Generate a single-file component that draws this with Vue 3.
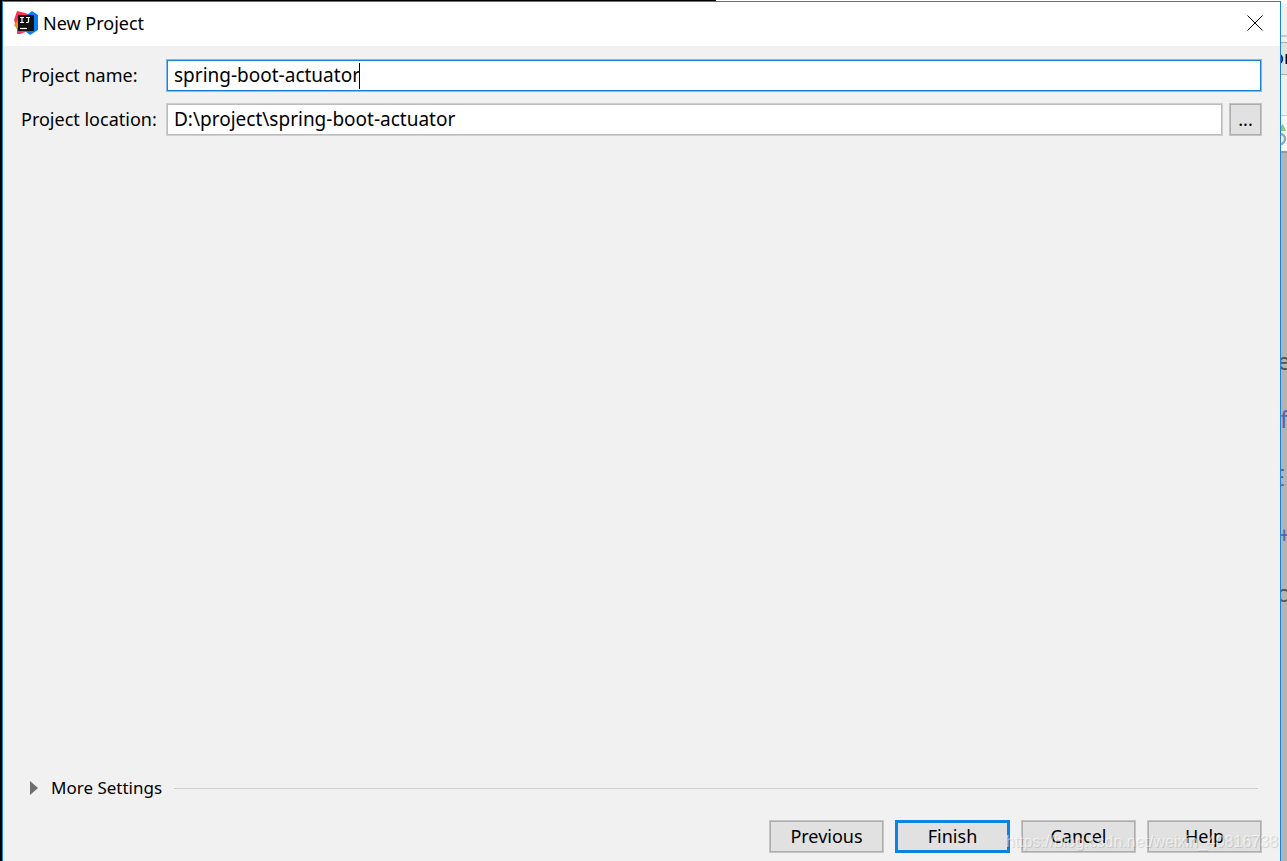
<script setup>
import { ref } from 'vue'

const projectName = ref('spring-boot-actuator')
const projectLocation = ref('D:\\project\\spring-boot-actuator')
const actions = [
  { label: 'Previous' },
  { label: 'Finish', primary: true },
  { label: 'Cancel' },
  { label: 'Help' },
]
</script>

<template>
  <div class="desktop">
    <div class="top-edge"></div>
    <div class="middle">
      <main class="dialog" role="dialog" aria-labelledby="dialog-title">
        <header class="titlebar">
          <svg class="logo" viewBox="0 0 24 24" aria-hidden="true">
            <path d="M3 0 11 2 17 4 8 14 3 17 0 9Z" fill="#fc3158" />
            <path d="M0 14 4 9 8 16 3 18Z" fill="#f68b1f" />
            <path d="M3 17 8 14 14 20 6 23 3 23Z" fill="#fc3168" />
            <path d="M13 4 18 0 24 4V19L16 24 11 20Z" fill="#087cfa" />
            <rect x="4" y="4" width="16" height="16" fill="#111" />
            <path d="M6 6.5h4M8 6.5v5M6 11.5h4M12 6.5h4M14.5 6.5v4q0 1-1 1h-1.500" fill="none" stroke="#fff" stroke-width="1.2" />
            <path d="M6 17.5h7" stroke="#fff" stroke-width="1.2" />
          </svg>
          <h1 id="dialog-title">New Project</h1>
          <button class="close" type="button" aria-label="Close">
            <svg viewBox="0 0 16 16" aria-hidden="true">
              <path d="M.5.5l15 15M15.5.5l-15 15" stroke="#000" stroke-width="1" />
            </svg>
          </button>
        </header>

        <form class="content" @submit.prevent>
          <div class="row">
            <label for="project-name">Project name:</label>
            <div class="field focused">
              <input id="project-name" v-model="projectName" type="text" spellcheck="false" />
              <span class="caret" aria-hidden="true"></span>
            </div>
          </div>
          <div class="row">
            <label for="project-location">Project location:</label>
            <div class="field">
              <input id="project-location" v-model="projectLocation" class="wide" type="text" spellcheck="false" />
            </div>
            <button class="browse" type="button">...</button>
          </div>

          <div class="more">
            <button class="toggle" type="button" aria-expanded="false">
              <svg viewBox="0 0 8 14" aria-hidden="true"><path d="M0 0 8 7 0 14Z" fill="#6e6e6e" /></svg>
              More Settings
            </button>
            <span class="rule"></span>
          </div>

          <footer class="actions">
            <button v-for="a in actions" :key="a.label" type="button" class="action" :class="{ primary: a.primary }">
              {{ a.label }}
            </button>
          </footer>
        </form>
      </main>

      <aside class="behind" aria-hidden="true">
        <div class="band menu"></div>
        <div class="band tab"><span>on</span></div>
        <div class="band tools">
          <svg viewBox="0 0 6 24">
            <path d="M0 8V3L2 1 5 8Z" fill="#8cc878" />
            <path d="M-1 11A5 5 0 0 1-1 21" fill="none" stroke="#9aa7b0" stroke-width="2.5" />
          </svg>
        </div>
        <div class="band page">
          <span class="glyph dark">e</span>
          <span class="glyph">f</span>
          <span class="glyph ending">E</span>
          <span class="glyph">+</span>
          <span class="glyph dark">o</span>
        </div>
      </aside>
    </div>
    <div class="watermark">https://blog.csdn.net/weixin_40816738</div>
  </div>
</template>

<style>
body {
  margin: 0;
}
</style>

<style scoped>
* {
  box-sizing: border-box;
}
.desktop {
  position: relative;
  display: flex;
  flex-direction: column;
  height: 100vh;
  overflow: hidden;
  padding-left: 2px;
  background: #000;
  color: #000;
  font-family: "Noto Sans", "Open Sans", sans-serif;
  font-size: 18px;
}
.top-edge {
  height: 1px;
  background: linear-gradient(to right, #000 55.6%, #fff 55.6%);
}
.middle {
  flex: 1;
  display: flex;
  min-height: 0;
}
.dialog {
  flex: 1;
  min-width: 0;
  display: flex;
  flex-direction: column;
  background: #f1f1f1;
  border: 1px solid #1883d7;
  border-bottom: 0;
}
.titlebar {
  display: flex;
  align-items: center;
  height: 44px;
  padding: 0 17px 2px 11px;
  background: #fff;
}
.logo {
  width: 24px;
  height: 24px;
}
h1 {
  flex: 1;
  margin: 0 0 0 5px;
  font-size: 18px;
  font-weight: 400;
  line-height: 24px;
}
button,
input {
  font: inherit;
  color: inherit;
}
.close {
  display: flex;
  padding: 0;
  border: 0;
  background: none;
}
.close svg {
  width: 16px;
  height: 16px;
}
.content {
  flex: 1;
  display: flex;
  flex-direction: column;
  padding: 13px 18px 8px;
}
.row {
  display: flex;
  align-items: center;
  height: 33px;
  margin-bottom: 11px;
}
.row label {
  flex: 0 0 145px;
  line-height: 24px;
  padding-bottom: 2px;
  white-space: nowrap;
}
.field {
  flex: 1;
  display: flex;
  align-items: center;
  height: 33px;
  padding: 0 7px;
  background: #fff;
  border: 1px solid #cfcfcf;
  box-shadow: inset 0 0 0 1px #bcbcbc;
}
.focused {
  border-color: #7fbcea;
  box-shadow: inset 0 0 0 1px #1883d7;
}
.field input {
  field-sizing: content;
  padding: 0 0 2px;
  border: 0;
  outline: 0;
  background: none;
  font-size: 19px;
  line-height: 24px;
}
.field .wide {
  field-sizing: fixed;
  flex: 1;
}
.caret {
  width: 1px;
  height: 26px;
  margin-left: -1px;
  background: #000;
}
.browse {
  width: 33px;
  height: 33px;
  margin-left: 6px;
}
.browse,
.action {
  padding: 0 0 2px;
  background: #e1e1e1;
  border: 1px solid #c4c4c4;
  box-shadow: inset 0 0 0 1px #adadad;
}
.more {
  display: flex;
  align-items: center;
  margin-top: auto;
  padding: 0 4px 0 9px;
}
.toggle {
  display: flex;
  align-items: center;
  gap: 13px;
  padding: 0;
  border: 0;
  background: none;
  font-size: 17px;
  line-height: 24px;
}
.toggle svg {
  width: 8px;
  height: 14px;
}
.rule {
  flex: 1;
  height: 1px;
  margin-left: 12px;
  background: #cdcdcd;
}
.actions {
  display: flex;
  justify-content: flex-end;
  gap: 11px;
  margin-top: 20px;
}
.action {
  width: 115px;
  height: 33px;
}
.primary {
  border-color: #0a84e0;
  box-shadow: inset 0 0 0 2px #0a84e0;
}
.behind {
  flex: 0 0 6px;
  display: flex;
  flex-direction: column;
  overflow: hidden;
  background: #b4b4b4;
}
.menu {
  height: 41px;
  background: linear-gradient(#fff 3px, #f0f0f0 3px, #f0f0f0 34px, #c8c8c8 34px, #c8c8c8 36px, #f0f0f0 36px);
}
.tab {
  height: 33px;
  display: flex;
  justify-content: center;
  border: solid #adadad;
  border-width: 1px 0;
  background: #e1e1e1;
  line-height: 29px;
}
.tools {
  height: 76px;
  padding-top: 48px;
  background: linear-gradient(#f0f0f0 40px, #c8c8c8 40px, #c8c8c8 41px, #f7f7f7 41px);
}
.tools svg {
  display: block;
  width: 6px;
  height: 24px;
}
.page {
  flex: 1;
  display: flex;
  flex-direction: column;
  align-items: center;
  padding-top: 179px;
  border-top: 2px solid #999;
}
.glyph {
  height: 58px;
  line-height: 58px;
  font-size: 24px;
  color: #5566aa;
}
.ending {
  align-self: flex-end;
  padding-right: 2px;
}
.dark {
  color: #555;
}
.watermark {
  position: absolute;
  right: 9px;
  bottom: 9px;
  font-family: "Liberation Sans", Arial, sans-serif;
  font-size: 16px;
  line-height: 20px;
  color: rgba(255, 255, 255, 0.6);
  text-shadow: 1px 1px 1px rgba(0, 0, 0, 0.15);
  pointer-events: none;
}
</style>
